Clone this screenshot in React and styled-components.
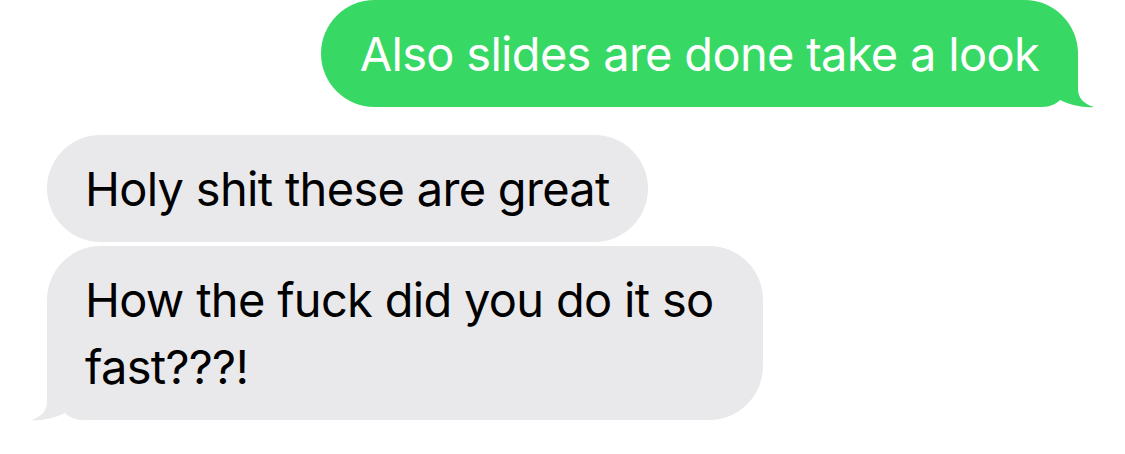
import React from 'react'
import styled, { createGlobalStyle } from 'styled-components'

const GlobalStyle = createGlobalStyle`
  html, body {
    margin: 0;
    padding: 0;
    background: #fff;
  }
  body {
    font-family: Inter, "Noto Sans", "Liberation Sans", sans-serif;
    -webkit-font-smoothing: antialiased;
  }
`

const Thread = styled.div`
  width: 1125px;
  height: 454px;
  box-sizing: border-box;
  display: flex;
  flex-direction: column;
  padding: 0 47px 0 47px;
  overflow: hidden;
`

const Bubble = styled.div`
  position: relative;
  isolation: isolate;
  box-sizing: border-box;
  align-self: ${(p) => (p.$sent ? 'flex-end' : 'flex-start')};
  max-width: ${(p) => (p.$sent ? 'none' : '716px')};
  margin-top: ${(p) => p.$gap || 0}px;
  padding: 20px ${(p) => (p.$sent ? '39px' : '38px')};
  border-radius: 54px;
  background: ${(p) => (p.$sent ? '#37d964' : '#e9e9eb')};
  color: ${(p) => (p.$sent ? '#fff' : '#000')};
  font-size: 47px;
  line-height: 67px;
  letter-spacing: -0.7px;
  white-space: pre-wrap;
`

const Tail = styled.svg`
  position: absolute;
  z-index: -1;
  bottom: 0;
  width: 70px;
  height: 56px;
  overflow: visible;
  ${(p) => (p.$sent ? 'right: -16px;' : 'left: -16px; transform: scaleX(-1);')}
  fill: ${(p) => (p.$sent ? '#37d964' : '#e9e9eb')};
`

const BubbleTail = ({ sent }) => (
  <Tail $sent={sent} viewBox="0 0 70 56">
    {/* corner filler + tail; body edge sits at x=54, bottom at y=56 */}
    <path d="M0 0 L54 0 L54 38 C54 46 59 53 70 56 C60 57 46 54 36 49 C32 53 26 56 18 56 L0 56 Z" />
  </Tail>
)

const Message = ({ sent, gap, tail, children }) => (
  <Bubble $sent={sent} $gap={gap}>
    {children}
    {tail && <BubbleTail sent={sent} />}
  </Bubble>
)

const App = () => (
  <>
    <GlobalStyle />
    <Thread>
      <Message sent tail>
        Also slides are done take a look
      </Message>
      <Message gap={28}>Holy shit these are great</Message>
      <Message gap={4} tail>
        How the fuck did you do it so fast???!
      </Message>
    </Thread>
  </>
)

export default App
